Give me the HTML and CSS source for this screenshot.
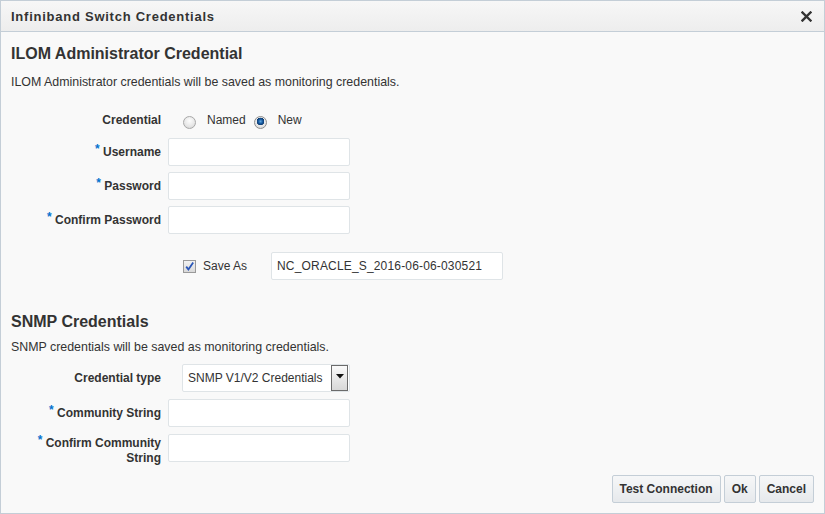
FILE: index.html
```html
<!DOCTYPE html>
<html lang="en">
<head>
<meta charset="utf-8">
<title>Infiniband Switch Credentials</title>
<link rel="stylesheet" href="styles.css">
</head>
<body>
<div class="dialog">
  <div class="header">
    <span class="title">Infiniband Switch Credentials</span>
    <svg class="close" width="11" height="11" viewBox="0 0 11 11" aria-label="Close">
      <path d="M1.5 1.5 L9.5 9.5 M9.5 1.5 L1.5 9.5" stroke="#333" stroke-width="2.4" stroke-linecap="square"/>
    </svg>
  </div>
  <div class="body">
    <h2 class="section-title sec-ilom">ILOM Administrator Credential</h2>
    <p class="desc desc-ilom">ILOM Administrator credentials will be saved as monitoring credentials.</p>

    <div class="row row-credential">
      <div class="label">Credential</div>
      <div class="field radios">
        <span class="radio"></span><span class="radio-label">Named</span>
        <span class="radio checked"></span><span class="radio-label">New</span>
      </div>
    </div>

    <div class="row row-first">
      <div class="label"><span class="req">*</span> Username</div>
      <div class="field"><div class="input"></div></div>
    </div>
    <div class="row row-next">
      <div class="label"><span class="req">*</span> Password</div>
      <div class="field"><div class="input"></div></div>
    </div>
    <div class="row row-next">
      <div class="label"><span class="req">*</span> Confirm Password</div>
      <div class="field"><div class="input"></div></div>
    </div>

    <div class="row row-saveas">
      <div class="label"></div>
      <div class="field saveas">
        <span class="checkbox">
          <svg width="11" height="11" viewBox="0 0 11 11"><path d="M2.2 5.6 L4.4 8.4 L9.2 1.6" fill="none" stroke="#2a56b8" stroke-width="1.8"/></svg>
        </span>
        <span class="saveas-label">Save As</span>
        <div class="input input-wide">NC_ORACLE_S_2016-06-06-030521</div>
      </div>
    </div>

    <h2 class="section-title sec-snmp">SNMP Credentials</h2>
    <p class="desc desc-snmp">SNMP credentials will be saved as monitoring credentials.</p>

    <div class="row row-select">
      <div class="label">Credential type</div>
      <div class="field">
        <div class="select">
          <span class="select-text">SNMP V1/V2 Credentials</span>
          <span class="select-btn"><svg width="8" height="5" viewBox="0 0 8 5"><path d="M0 0 H8 L4 4.5 Z" fill="#111"/></svg></span>
        </div>
      </div>
    </div>
    <div class="row row-comm">
      <div class="label"><span class="req">*</span> Community String</div>
      <div class="field"><div class="input"></div></div>
    </div>
    <div class="row row-comm row-top">
      <div class="label label-multi"><span class="req">*</span> Confirm Community String</div>
      <div class="field"><div class="input"></div></div>
    </div>
  </div>
  <div class="footer">
    <button class="btn">Test Connection</button>
    <button class="btn">Ok</button>
    <button class="btn">Cancel</button>
  </div>
</div>
</body>
</html>
```

FILE: styles.css
```css
* { box-sizing: border-box; }
html, body { margin: 0; padding: 0; }
body {
  width: 825px;
  height: 514px;
  font-family: "Liberation Sans", Arial, sans-serif;
  font-size: 12px;
  color: #333;
  background: #f9f9f9;
}
.dialog {
  width: 825px;
  height: 514px;
  border: 1px solid #c4ced7;
  background: #f9f9f9;
  display: flex;
  flex-direction: column;
  overflow: hidden;
}
.header {
  flex: none;
  height: 31px;
  border-bottom: 1px solid #c4ced7;
  background: linear-gradient(#f7f7f7, #ededed);
  display: flex;
  align-items: center;
  justify-content: space-between;
  padding: 0 12px 0 10px;
}
.title {
  font-size: 13px;
  font-weight: bold;
  letter-spacing: 0.75px;
  color: #333;
}
.close { display: block; }
.body {
  flex: 1;
  padding: 0 10px;
}
.section-title {
  margin: 0;
  font-size: 16px;
  line-height: 20px;
  font-weight: bold;
  color: #333;
}
.sec-ilom { margin-top: 12px; }
.sec-snmp { margin-top: 32px; }
.desc {
  margin: 0;
  font-size: 12.4px;
  line-height: 14px;
  color: #333;
}
.desc-ilom { margin-top: 11px; }
.desc-snmp { margin-top: 8px; }

.row {
  display: flex;
  align-items: center;
  gap: 7px;
}
.label {
  width: 150px;
  flex: none;
  text-align: right;
  font-weight: bold;
  line-height: 28px;
  color: #333;
}
.req {
  color: #0572ce;
  font-weight: bold;
  line-height: 1;
  vertical-align: 3px;
}
.field { display: flex; align-items: center; }

.row-credential { margin-top: 21px; height: 20px; }
.row-credential .label { line-height: 20px; }
.row-first { margin-top: 8px; }
.row-next { margin-top: 6px; }
.row-saveas { margin-top: 18px; }
.row-select { margin-top: 10px; }
.row-comm { margin-top: 7px; }
.row-top { align-items: flex-start; }
.label-multi { line-height: 15px; }

.input {
  width: 182px;
  height: 28px;
  background: #fff;
  border: 1px solid #dfe4e7;
  border-radius: 2px;
  padding: 0 5px;
  line-height: 26px;
  color: #333;
  font-size: 12px;
}
.input-wide { width: 232px; letter-spacing: 0.17px; }

.radios { margin-left: 15px; height: 20px; }
.radio {
  width: 13px;
  height: 13px;
  border-radius: 50%;
  border: 1px solid #a8a8a8;
  background: radial-gradient(circle at 50% 35%, #fdfdfd 0%, #e6e6e6 60%, #cfcfcf 100%);
  margin-top: 4px;
  flex: none;
}
.radio.checked {
  border-color: #8c8c8c;
  background:
    radial-gradient(circle at 50% 40%, #5fa8e0 0, #1b5fa6 2px, #0d3a6e 3.6px, transparent 4px),
    radial-gradient(circle at 50% 35%, #fdfdfd 0%, #e6e6e6 60%, #cfcfcf 100%);
}
.radio-label { margin-left: 11px; margin-right: 8px; }

.saveas { margin-left: 15px; }
.checkbox {
  width: 13px;
  height: 13px;
  border: 1px solid #9a9a9a;
  background: linear-gradient(#f2f2f2, #d9d9d9);
  display: flex;
  align-items: center;
  justify-content: center;
  flex: none;
}
.checkbox svg { display: block; }
.saveas-label { margin-left: 7px; margin-right: 24px; }

.select {
  margin-left: 14px;
  width: 168px;
  height: 28px;
  background: #fff;
  border: 1px solid #dfe4e7;
  border-radius: 2px;
  display: flex;
  align-items: center;
  justify-content: space-between;
  padding: 0 1px 0 5px;
}
.select-btn {
  width: 17px;
  height: 26px;
  border: 1px solid #6b6b6b;
  background: linear-gradient(#fafafa, #d8d8d8);
  display: flex;
  align-items: center;
  justify-content: center;
}
.select-btn svg { display: block; margin-top: -4px; }

.footer {
  flex: none;
  display: flex;
  justify-content: flex-end;
  gap: 3px;
  padding: 0 10px 10px 0;
}
.btn {
  height: 28px;
  padding: 0 7px;
  font-family: "Liberation Sans", Arial, sans-serif;
  font-size: 12px;
  font-weight: bold;
  color: #333;
  border: 1px solid #c4ced7;
  border-radius: 2px;
  background: linear-gradient(#f6f7f8, #e6e9ec);
}
```
